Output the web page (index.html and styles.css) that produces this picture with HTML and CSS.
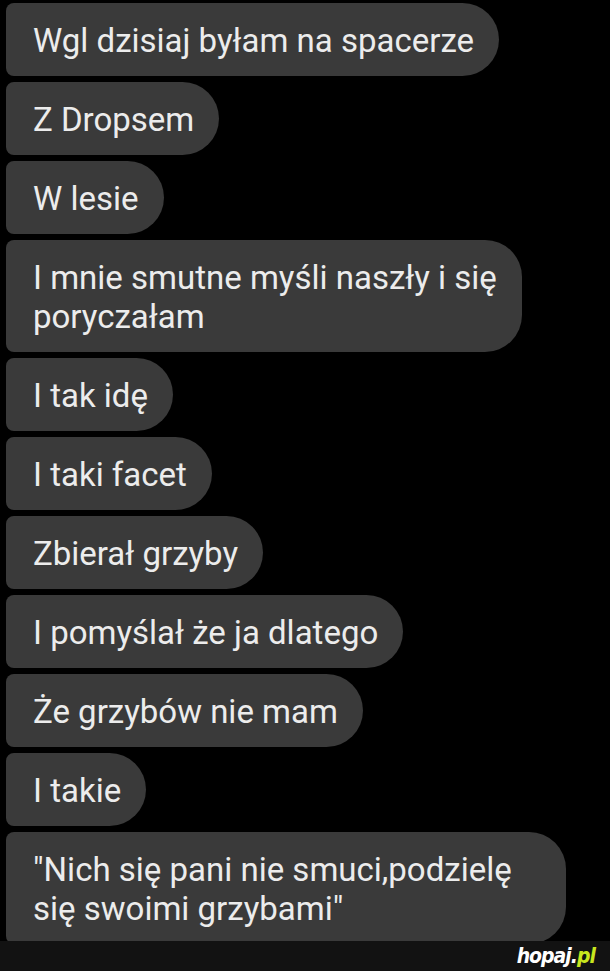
FILE: index.html
```html
<!DOCTYPE html>
<html lang="pl">
<head>
<meta charset="utf-8">
<title>hopaj.pl</title>
<link rel="stylesheet" href="styles.css">
</head>
<body>
<div class="page">
  <div class="chat">
    <div class="bubble">Wgl dzisiaj byłam na spacerze</div>
    <div class="bubble">Z Dropsem</div>
    <div class="bubble">W lesie</div>
    <div class="bubble">I mnie smutne myśli naszły i się<br>poryczałam</div>
    <div class="bubble">I tak idę</div>
    <div class="bubble">I taki facet</div>
    <div class="bubble">Zbierał grzyby</div>
    <div class="bubble">I pomyślał że ja dlatego</div>
    <div class="bubble">Że grzybów nie mam</div>
    <div class="bubble">I takie</div>
    <div class="bubble bubble-wide">"Nich się pani nie smuci,podzielę<br>się swoimi grzybami"</div>
  </div>
  <div class="footer">
    <span class="logo">hopaj.<span class="logo-pl">pl</span></span>
  </div>
</div>
</body>
</html>
```
FILE: styles.css
```css
html, body {
  margin: 0;
  padding: 0;
  background: #000;
}
.page {
  width: 610px;
  height: 971px;
  overflow: hidden;
  display: flex;
  flex-direction: column;
}
.chat {
  height: 941px;
  overflow: hidden;
  padding: 3px 0 0 6px;
  box-sizing: border-box;
  display: flex;
  flex-direction: column;
  align-items: flex-start;
  gap: 6px;
}
.bubble {
  flex: none;
  box-sizing: border-box;
  background: #3a3a3a;
  color: #ececec;
  font-family: Roboto, "Noto Sans", sans-serif;
  font-size: 33px;
  line-height: 39px;
  padding: 18px 25px 16px 27px;
  border-radius: 8px 37px 37px 8px;
  white-space: nowrap;
}
.bubble-wide {
  width: 560px;
}
.footer {
  height: 30px;
  background: #121212;
  display: flex;
  align-items: center;
  justify-content: flex-end;
  padding-right: 15px;
}
.logo {
  font-family: "Liberation Sans Narrow", "DejaVu Sans Condensed", sans-serif;
  font-weight: bold;
  font-style: italic;
  font-size: 21px;
  color: #fff;
  letter-spacing: -1px;
}
.logo-pl {
  color: #c8e61e;
}
```
